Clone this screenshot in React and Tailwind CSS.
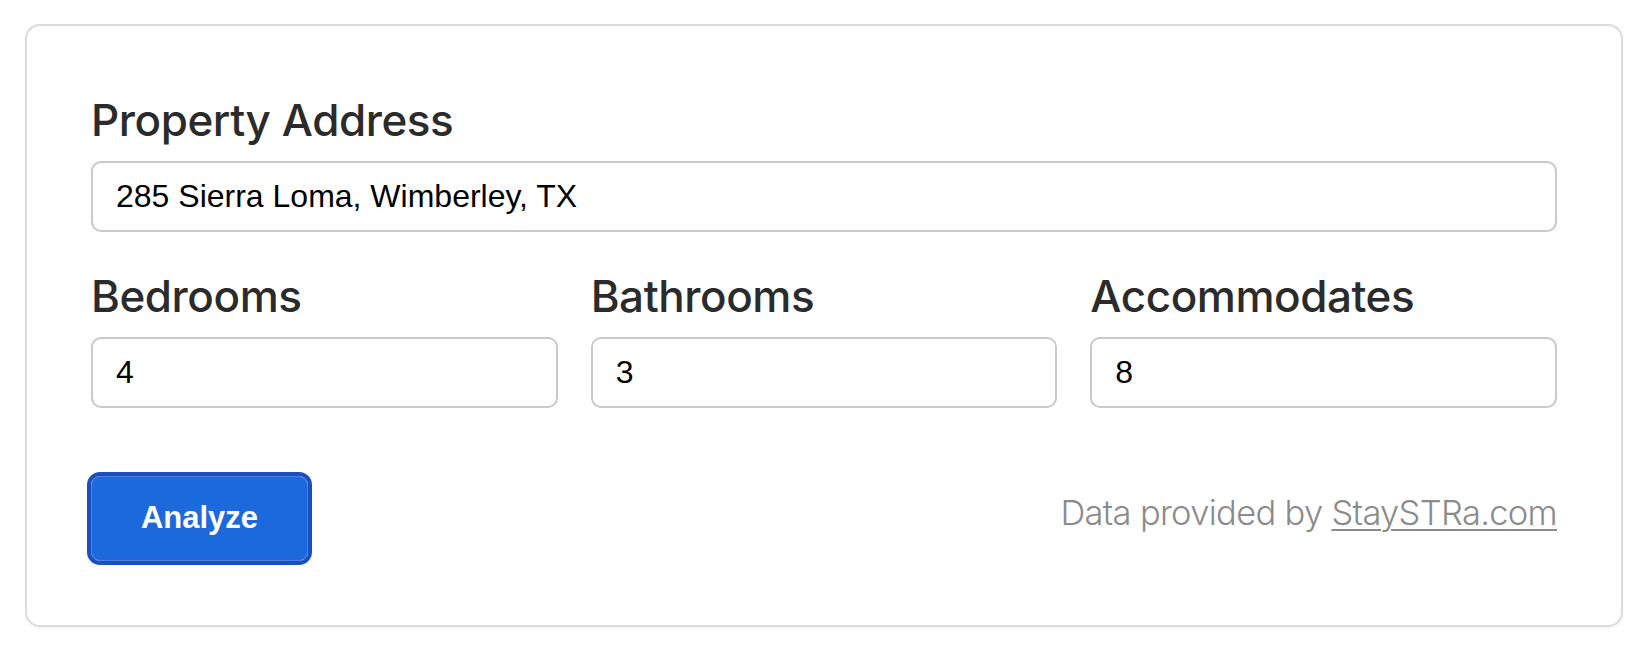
import React, { useState } from "react";

const labelCls =
  "block text-[44px] leading-[52px] font-medium text-[#2b2b2b] tracking-[-0.01em]";

const inputCls =
  "w-full h-[71px] rounded-[10px] border-2 border-[#c9c9c9] bg-white px-[23px] text-[32px] text-black outline-none font-['Liberation_Sans',Arial,sans-serif]";

const App = () => {
  /* -------------------- STATE -------------------- */
  const [address, setAddress] = useState("285 Sierra Loma, Wimberley, TX");
  const [bedrooms, setBedrooms] = useState("4");
  const [bathrooms, setBathrooms] = useState("3");
  const [guests, setGuests] = useState("8");

  const fields = [
    { key: "bedrooms", label: "Bedrooms", value: bedrooms, set: setBedrooms },
    { key: "bathrooms", label: "Bathrooms", value: bathrooms, set: setBathrooms },
    { key: "guests", label: "Accommodates", value: guests, set: setGuests },
  ];

  /* -------------------- UI -------------------- */
  return (
    <div className="min-h-screen bg-white pl-[25px] pr-[23px] pt-[24px] pb-[25px] font-['Inter',sans-serif]">
      <div className="rounded-[15px] border-2 border-[#dcdcdc] bg-white shadow-[0_1px_3px_rgba(0,0,0,0.06)] pl-[64px] pr-[64px] pt-[68px] pb-[64px]">
        <label className={labelCls}>Property Address</label>
        <input
          value={address}
          onChange={(e) => setAddress(e.target.value)}
          className={`${inputCls} mt-[15px]`}
        />

        <div className="grid grid-cols-3 gap-x-[33px] mt-[38px]">
          {fields.map((f) => (
            <div key={f.key}>
              <label className={labelCls}>{f.label}</label>
              <input
                value={f.value}
                onChange={(e) => f.set(e.target.value)}
                className={`${inputCls} mt-[15px]`}
              />
            </div>
          ))}
        </div>

        {/* footer row: button + credit */}
        <div className="flex items-center justify-between mt-[68px]">
          <button className="w-[217px] h-[85px] rounded-[9px] border border-[#4a82e0] bg-[#1c69db] outline-4 outline-[#1a4fbf] text-white text-[31px] font-bold font-['Liberation_Sans',Arial,sans-serif]">
            Analyze
          </button>
          <p className="mb-[11px] text-[34.5px] font-light text-[#8b8b8b] tracking-[-0.02em]">
            Data provided by{" "}
            <a href="#" className="underline underline-offset-[4px] decoration-[2px]">
              StaySTRa.com
            </a>
          </p>
        </div>
      </div>
    </div>
  );
};

export default App;
